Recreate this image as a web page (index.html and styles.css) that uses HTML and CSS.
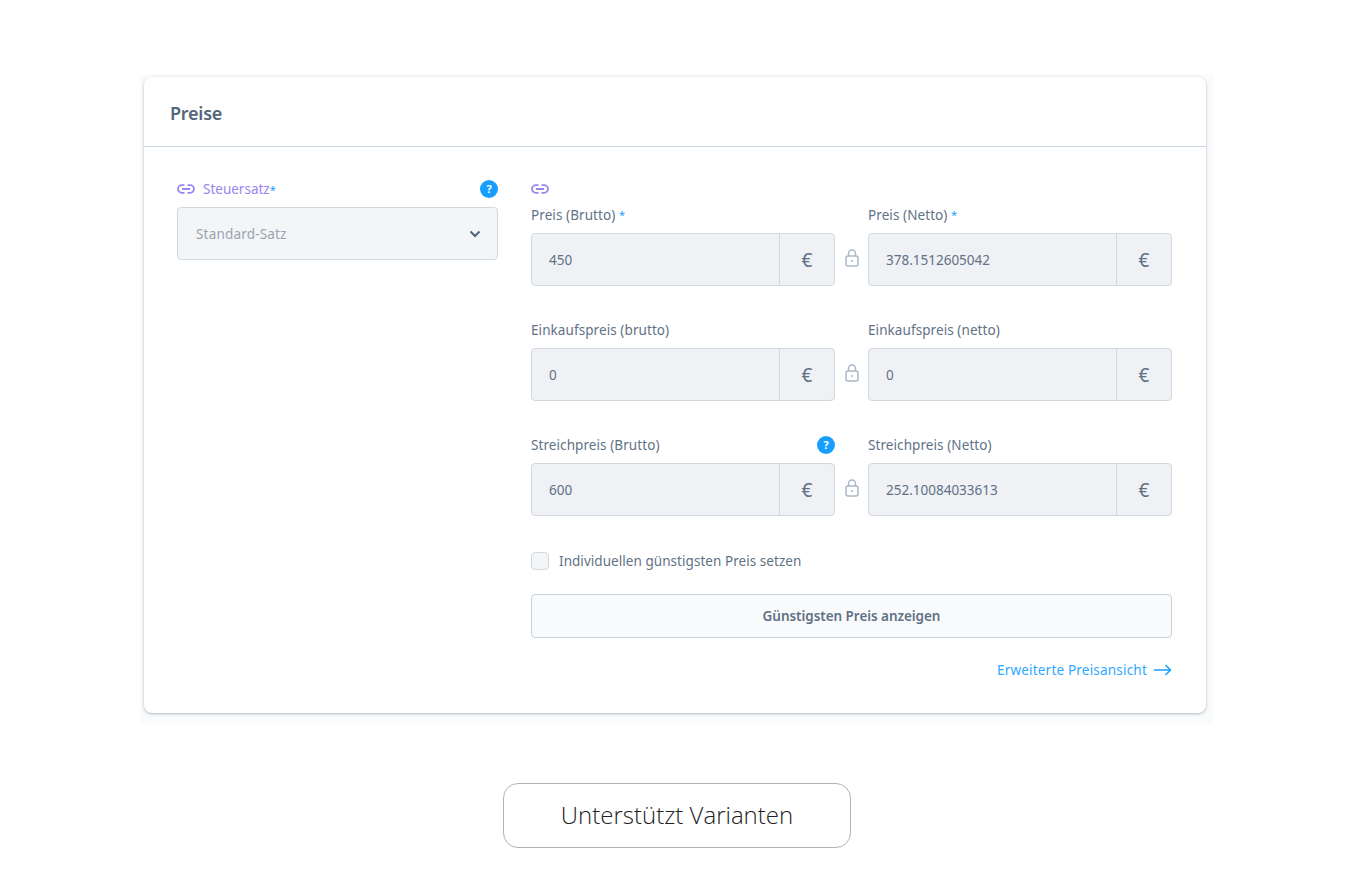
FILE: index.html
```html
<!DOCTYPE html>
<html lang="de">
<head>
<meta charset="UTF-8"/>
<meta content="width=device-width, initial-scale=1" name="viewport"/>
<title>Preise</title>
<link rel="stylesheet" href="styles.css">
</head>
<body>
<div class="shot">
    <div class="card">
        <div class="card-header">Preise</div>
        <div class="card-body">
            <div class="tax-col">
                <div class="label-row">
                    <span class="tax-label">
                        <svg class="link-icon" viewBox="0 0 18 10"><path d="M7.500 1.200H4.800a3.800 3.800 0 0 0 0 7.600h2.700M10.500 1.200h2.700a3.800 3.800 0 0 1 0 7.600h-2.700M5 5h8"/></svg>
                        Steuersatz<span class="star">*</span>
                    </span>
                    <span class="help">?</span>
                </div>
                <div class="select">
                    <span>Standard-Satz</span>
                    <svg class="chevron" viewBox="0 0 12 8"><path d="M1.500 1.500 6 6l4.500-4.500"/></svg>
                </div>
            </div>
            <div class="price-col">
                <div class="inherit-row">
                    <svg class="link-icon" viewBox="0 0 18 10"><path d="M7.500 1.200H4.800a3.800 3.800 0 0 0 0 7.600h2.700M10.500 1.200h2.700a3.800 3.800 0 0 1 0 7.600h-2.700M5 5h8"/></svg>
                </div>

                <div class="price-row">
                    <div class="price-field">
                        <div class="label-row"><label>Preis (Brutto) <span class="star">*</span></label></div>
                        <div class="input-group"><span class="input">450</span><span class="suffix">€</span></div>
                    </div>
                    <div class="lock"><svg viewBox="0 0 14 18"><path d="M3.500 7V4.500a3.500 3.500 0 0 1 7 0V7"/><rect x="1" y="7" width="12" height="10" rx="2"/><circle class="dot" cx="7" cy="12" r="1"/></svg></div>
                    <div class="price-field">
                        <div class="label-row"><label>Preis (Netto) <span class="star">*</span></label></div>
                        <div class="input-group"><span class="input">378.1512605042</span><span class="suffix">€</span></div>
                    </div>
                </div>

                <div class="price-row">
                    <div class="price-field">
                        <div class="label-row"><label>Einkaufspreis (brutto)</label></div>
                        <div class="input-group"><span class="input">0</span><span class="suffix">€</span></div>
                    </div>
                    <div class="lock"><svg viewBox="0 0 14 18"><path d="M3.500 7V4.500a3.500 3.500 0 0 1 7 0V7"/><rect x="1" y="7" width="12" height="10" rx="2"/><circle class="dot" cx="7" cy="12" r="1"/></svg></div>
                    <div class="price-field">
                        <div class="label-row"><label>Einkaufspreis (netto)</label></div>
                        <div class="input-group"><span class="input">0</span><span class="suffix">€</span></div>
                    </div>
                </div>

                <div class="price-row">
                    <div class="price-field">
                        <div class="label-row"><label>Streichpreis (Brutto)</label><span class="help">?</span></div>
                        <div class="input-group"><span class="input">600</span><span class="suffix">€</span></div>
                    </div>
                    <div class="lock"><svg viewBox="0 0 14 18"><path d="M3.500 7V4.500a3.500 3.500 0 0 1 7 0V7"/><rect x="1" y="7" width="12" height="10" rx="2"/><circle class="dot" cx="7" cy="12" r="1"/></svg></div>
                    <div class="price-field">
                        <div class="label-row"><label>Streichpreis (Netto)</label></div>
                        <div class="input-group"><span class="input">252.10084033613</span><span class="suffix">€</span></div>
                    </div>
                </div>

                <div class="check-row">
                    <span class="checkbox"></span>
                    <span>Individuellen günstigsten Preis setzen</span>
                </div>
                <div class="wide-button">Günstigsten Preis anzeigen</div>
                <div class="more-row">
                    <a class="more-link">Erweiterte Preisansicht
                        <svg viewBox="0 0 18 12"><path d="M0 6h16.500M11.500 1l5 5-5 5"/></svg>
                    </a>
                </div>
            </div>
        </div>
    </div>
</div>

<div class="caption">Unterstützt Varianten</div>
</body>
</html>
```

FILE: styles.css
```css
:root {
    --text: #5f7286;
    --title: #52667a;
    --border: #d1d9e0;
    --blue: #189eff;
    --purple: #9a85f0;
}

body {
    margin: 0;
    padding-top: 74px;
    background: #fff;
    font-family: 'Noto Sans', sans-serif;
    font-size: 13.500px;
    color: var(--text);
}

.shot {
    width: 1073px;
    height: 650px;
    box-sizing: border-box;
    margin-left: 140px;
    padding: 3px 7px 11px 4px;
    background: #fafbfc;
}

.card {
    height: 636px;
    box-sizing: border-box;
    background: #fff;
    border-radius: 8px;
    box-shadow: 0 1px 3px rgba(82,102,122,0.45);
}

.card-header {
    height: 70px;
    box-sizing: border-box;
    display: flex;
    align-items: center;
    padding: 3px 0 0 26px;
    border-bottom: 1px solid #c9d6e2;
    font-size: 18px;
    font-weight: 600;
    letter-spacing: -0.25px;
    color: var(--title);
}

.card-body {
    display: flex;
    gap: 33px;
    padding: 32px 34px 0 33px;
}

.tax-col {
    width: 321px;
}

.price-col {
    width: 641px;
}

.label-row {
    display: flex;
    justify-content: space-between;
    align-items: center;
    height: 20px;
    margin-bottom: 8px;
    letter-spacing: 0.08px;
}

.tax-label {
    display: flex;
    align-items: center;
    color: var(--purple);
    letter-spacing: 0;
}

.link-icon {
    width: 18px;
    height: 10px;
    margin-right: 8px;
    fill: none;
    stroke: var(--purple);
    stroke-width: 1.800;
    display: block;
}

.star {
    color: var(--blue);
    font-size: 11px;
    vertical-align: 1px;
}

.help {
    width: 18px;
    height: 18px;
    border-radius: 50%;
    background: var(--blue);
    color: #fff;
    font-size: 11px;
    font-weight: 700;
    line-height: 18px;
    text-align: center;
    letter-spacing: 0;
}

.select {
    height: 53px;
    box-sizing: border-box;
    display: flex;
    align-items: center;
    justify-content: space-between;
    padding: 0 16px 0 18px;
    background: #f4f5f7;
    border: 1px solid var(--border);
    border-radius: 4px;
    color: #98a4b0;
    letter-spacing: 0.18px;
}

.chevron {
    width: 12px;
    height: 8px;
    fill: none;
    stroke: var(--title);
    stroke-width: 2;
}

.inherit-row {
    height: 20px;
    margin-bottom: 6px;
    display: flex;
    align-items: center;
}

.price-row {
    display: flex;
    margin-bottom: 34px;
}

.price-field {
    width: 304px;
}

.lock {
    width: 33px;
    height: 53px;
    margin-top: 28px;
    display: flex;
    justify-content: center;
    padding-top: 16px;
    box-sizing: border-box;
}

.lock svg {
    width: 14px;
    height: 18px;
    fill: none;
    stroke: #a9b8c6;
    stroke-width: 1.500;
}

.lock .dot {
    fill: #a9b8c6;
    stroke: none;
}

.input-group {
    display: flex;
    height: 53px;
    box-sizing: border-box;
    background: #eff1f5;
    border: 1px solid var(--border);
    border-radius: 4px;
}

.input {
    flex: 1;
    display: flex;
    align-items: center;
    padding-left: 17px;
}

.suffix {
    width: 55px;
    box-sizing: border-box;
    display: flex;
    align-items: center;
    justify-content: center;
    border-left: 1px solid var(--border);
    font-size: 19px;
}

.check-row {
    display: flex;
    align-items: center;
    gap: 10px;
    height: 18px;
    margin-top: 36px;
    letter-spacing: 0.05px;
}

.checkbox {
    width: 18px;
    height: 18px;
    box-sizing: border-box;
    background: #f4f5f7;
    border: 1px solid var(--border);
    border-radius: 4px;
}

.wide-button {
    height: 44px;
    box-sizing: border-box;
    margin-top: 24px;
    display: flex;
    align-items: center;
    justify-content: center;
    background: #f9fafb;
    border: 1px solid #c9d0d9;
    border-radius: 4px;
    font-weight: 600;
    letter-spacing: -0.05px;
}

.more-row {
    display: flex;
    justify-content: flex-end;
    margin-top: 23px;
}

.more-link {
    display: flex;
    align-items: center;
    gap: 7px;
    color: #2fa8ff;
    letter-spacing: 0.2px;
}

.more-link svg {
    width: 18px;
    height: 12px;
    fill: none;
    stroke: var(--blue);
    stroke-width: 1.500;
}

.caption {
    width: 348px;
    height: 65px;
    box-sizing: border-box;
    margin: 59px auto 0;
    padding-bottom: 2px;
    display: flex;
    align-items: center;
    justify-content: center;
    border: 1px solid #b3b3b3;
    border-radius: 15px;
    font-family: 'Open Sans', sans-serif;
    font-size: 24px;
    font-weight: 300;
    color: #222;
}
```
